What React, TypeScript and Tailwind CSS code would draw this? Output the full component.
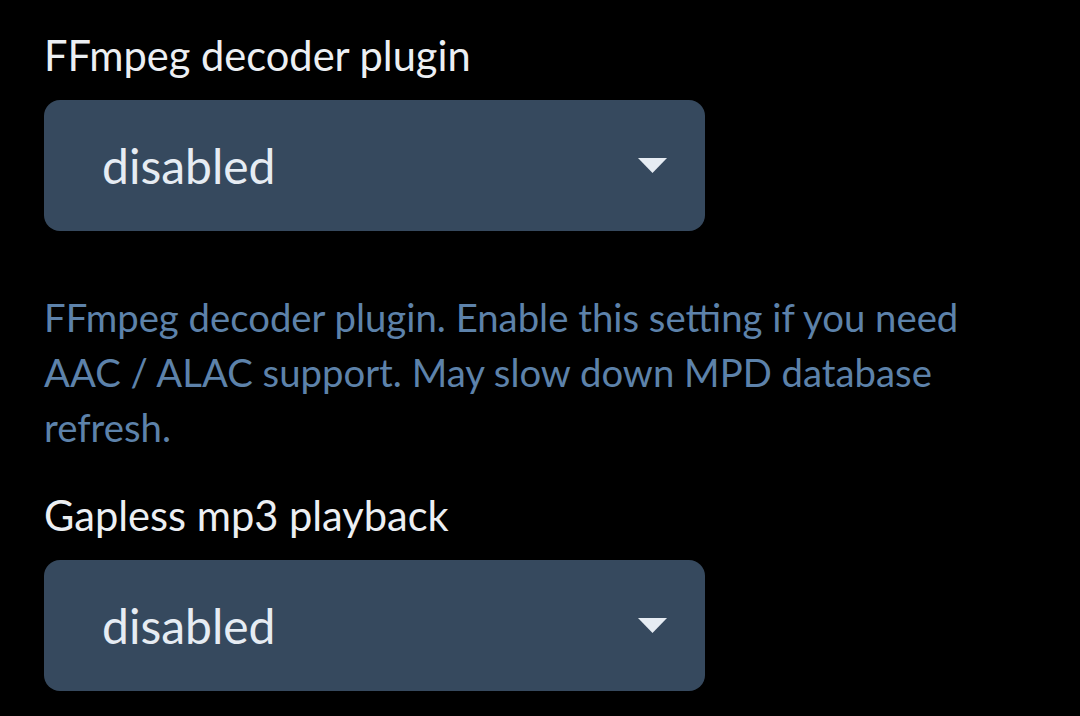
import React from "react";

function Select({ value }: { value: string }) {
  return (
    <div className="mt-[20px] flex h-[131px] w-[661px] items-center justify-between rounded-[16px] bg-[#36495e] pl-[58px] pr-[38px]">
      <span className="text-[48px] leading-none text-[#e6ecf3]">{value}</span>
      <svg width="29" height="15" viewBox="0 0 29 15">
        <polygon points="0,0 29,0 14.5,15" fill="#e6ecf3" />
      </svg>
    </div>
  );
}

export default function App() {
  return (
    <div
      className="min-h-screen bg-black px-[44px] pt-[30px]"
      style={{ fontFamily: "Lato, 'Noto Sans', sans-serif" }}
    >
      <div className="text-[41.6px] leading-[50px] text-[#eceff3]">FFmpeg decoder plugin</div>
      <Select value="disabled" />
      <p className="mt-[59px] w-[960px] text-[38.3px] leading-[55px] text-[#5d82aa]">
        FFmpeg decoder plugin. Enable this setting if you need AAC / ALAC support. May slow down MPD database refresh.
      </p>
      <div className="mt-[35px] text-[41.6px] leading-[50px] text-[#eceff3]">Gapless mp3 playback</div>
      <Select value="disabled" />
    </div>
  );
}
